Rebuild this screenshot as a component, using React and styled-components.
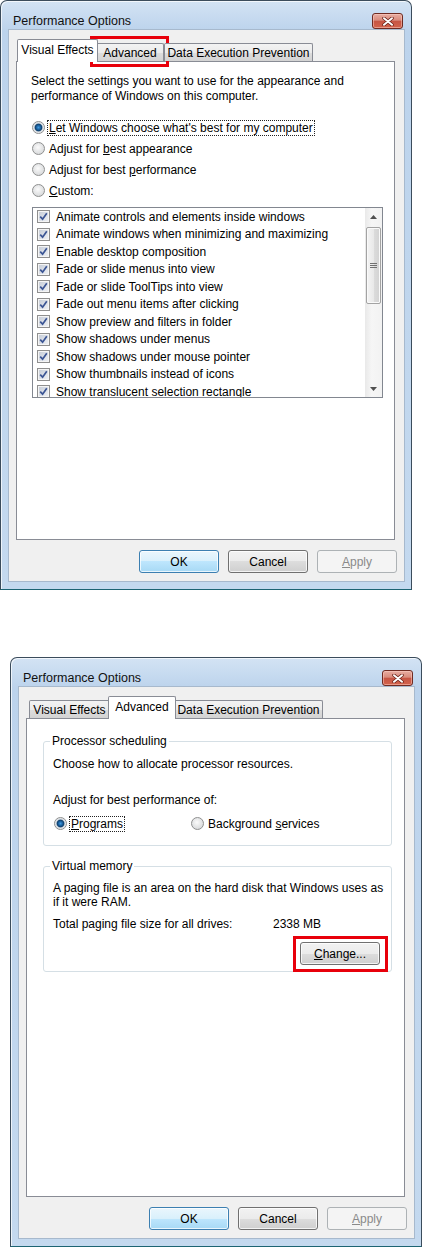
import React from "react";
import styled, { createGlobalStyle } from "styled-components";

const GlobalStyle = createGlobalStyle`
  body {
    margin: 0;
    background: #fff;
  }
`;

const uiFont = `"Segoe UI", "Liberation Sans", Arial, sans-serif`;

const effects = [
  "Animate controls and elements inside windows",
  "Animate windows when minimizing and maximizing",
  "Enable desktop composition",
  "Fade or slide menus into view",
  "Fade or slide ToolTips into view",
  "Fade out menu items after clicking",
  "Show preview and filters in folder",
  "Show shadows under menus",
  "Show shadows under mouse pointer",
  "Show thumbnails instead of icons",
  "Show translucent selection rectangle",
];

const Page = styled.div`
  display: flex;
  flex-direction: column;
  gap: 67px;
  width: 423px;
  font-family: ${uiFont};
  font-size: 12px;
  color: #000;
`;

const Window = styled.div`
  position: relative;
  margin-left: ${(p) => p.$offset || 0}px;
  width: 412px;
  height: 590px;
  box-sizing: border-box;
  display: flex;
  flex-direction: column;
  padding: 0 7px 8px 8px;
  border: 1px solid #3b4c5c;
  border-bottom-color: #1d6473;
  border-radius: 7px 7px 0 0;
  background: linear-gradient(180deg, #d3e3f4 0, #bcd3ec 30px, #c4d9ef 100%);
  box-shadow: inset 1px 1px 0 rgba(255, 255, 255, 0.7);
`;

const TitleBar = styled.div`
  height: 29px;
  box-sizing: border-box;
  padding: 11px 1px 0 4px;
  display: flex;
  align-items: center;
  justify-content: space-between;
`;

const Title = styled.span`
  color: #111;
  font-size: 12.5px;
  line-height: 16px;
`;

const CloseButton = styled.span`
  width: 31px;
  height: 16px;
  box-sizing: border-box;
  border: 1px solid #6f2b22;
  border-radius: 3px;
  display: flex;
  align-items: center;
  justify-content: center;
  background: linear-gradient(180deg, #e8ada2 0, #d98b7c 45%, #c65544 50%, #d3634c 100%);
  box-shadow: inset 0 0 0 1px rgba(255, 210, 200, 0.5);
`;

const Client = styled.div`
  flex: 1;
  display: flex;
  flex-direction: column;
  padding: 8px 7px 8px 7px;
  background: #f0f0f0;
  box-shadow: 0 0 0 1px #a7b9cd;
`;

const TabStrip = styled.div`
  height: 23px;
  display: flex;
  align-items: flex-end;
  padding-left: 3px;
`;

const Tab = styled.div`
  position: relative;
  z-index: ${(p) => (p.$active ? 2 : 1)};
  width: ${(p) => p.$width}px;
  height: ${(p) => (p.$active ? 23 : 18)}px;
  margin: ${(p) => (p.$active ? "0 -2px -1px" : "0")};
  box-sizing: border-box;
  display: flex;
  align-items: center;
  justify-content: center;
  padding-bottom: ${(p) => (p.$active ? 3 : 0)}px;
  border: 1px solid #898c95;
  border-bottom: none;
  border-radius: 2px 2px 0 0;
  background: ${(p) =>
    p.$active
      ? "#fff"
      : "linear-gradient(180deg, #f3f3f3 0, #ebebeb 50%, #dedede 50%, #d3d3d3 100%)"};
  white-space: nowrap;

  &::after {
    content: "";
    display: ${(p) => (p.$marked ? "block" : "none")};
    position: absolute;
    inset: -8px -6px -6px -7px;
    border: 3px solid #e8000b;
  }
`;

const Panel = styled.div`
  flex: 1;
  margin-right: 2px;
  background: #fff;
  border: 1px solid #898c95;
  display: flex;
  flex-direction: column;
  padding: ${(p) => p.$pad};
`;

const Text = styled.p`
  margin: ${(p) => p.$top || 0}px 0 0;
  line-height: ${(p) => p.$lh || 15}px;
  white-space: nowrap;
`;

const Options = styled.div`
  margin-top: ${(p) => p.$top || 0}px;
  display: flex;
  flex-direction: ${(p) => (p.$row ? "row" : "column")};
`;

const Option = styled.label`
  height: ${(p) => p.$h || 21}px;
  width: ${(p) => (p.$w ? `${p.$w}px` : "auto")};
  display: flex;
  align-items: center;
  gap: 4px;
  padding-left: 1px;
  white-space: nowrap;
`;

const Radio = styled.span`
  flex: none;
  width: 13px;
  height: 13px;
  box-sizing: border-box;
  border-radius: 50%;
  border: 1px solid #8e8f8f;
  background: ${(p) =>
    p.$checked
      ? "radial-gradient(circle, #3f9ae0 0, #1b5f9c 2.2px, #0d3e6c 3.4px, #cfd6dd 4.3px, #eef0f2 5.5px)"
      : "radial-gradient(circle at 45% 40%, #fbfbfb 0, #e6e7e8 45%, #cfd1d3 100%)"};
`;

const Focus = styled.span`
  outline: 1px dotted #222;
  outline-offset: 0;
  padding: 0 1px;
  margin-left: -1px;
  line-height: 14px;
`;

const ListBox = styled.div`
  margin: ${(p) => p.$top || 0}px 0 0 1px;
  width: 351px;
  height: 191px;
  box-sizing: border-box;
  border: 1px solid #828790;
  display: flex;
  overflow: hidden;
`;

const Items = styled.div`
  flex: 1;
  overflow: hidden;
`;

const Item = styled.div`
  height: 17.5px;
  display: flex;
  align-items: center;
  gap: 6px;
  padding-left: 4px;
  white-space: nowrap;
`;

const Check = styled.span`
  flex: none;
  width: 13px;
  height: 13px;
  box-sizing: border-box;
  border: 1px solid #8f8f8f;
  background: linear-gradient(135deg, #c3cad5 0, #dfe3ea 60%, #f0f2f5 100%);
  box-shadow: inset 0 0 0 1px #f5f5f5;
  display: flex;
  align-items: center;
  justify-content: center;
`;

const ScrollBar = styled.div`
  width: 17px;
  display: flex;
  flex-direction: column;
  background: linear-gradient(90deg, #e9e9e9, #f6f6f6 40%, #f2f2f2);
`;

const Arrow = styled.div`
  height: 17px;
  display: flex;
  align-items: center;
  justify-content: center;
`;

const Track = styled.div`
  flex: 1;
  display: flex;
  flex-direction: column;
  align-items: center;
`;

const Thumb = styled.div`
  margin-top: 2px;
  width: 15px;
  height: 77px;
  box-sizing: border-box;
  border: 1px solid #a3a3a3;
  border-radius: 2px;
  background: linear-gradient(90deg, #f4f4f4 0, #e9e9e9 50%, #dcdcdc 51%, #d2d2d2 100%);
  box-shadow: inset 0 0 0 1px #fafafa;
  display: flex;
  align-items: center;
  justify-content: center;
`;

const ButtonRow = styled.div`
  margin-top: 10px;
  display: flex;
  justify-content: flex-end;
  gap: 9px;
`;

const Button = styled.div`
  position: relative;
  width: 80px;
  height: 23px;
  box-sizing: border-box;
  border: 1px solid ${(p) => (p.$primary ? "#3c7fb1" : p.$disabled ? "#adb2b5" : "#707070")};
  border-radius: 3px;
  display: flex;
  align-items: center;
  justify-content: center;
  color: ${(p) => (p.$disabled ? "#8a8a8a" : "#000")};
  background: ${(p) =>
    p.$primary
      ? "linear-gradient(180deg, #eaf6fd 0, #d9f0fc 50%, #bee6fd 50%, #a7d9f5 100%)"
      : p.$disabled
      ? "#f4f4f4"
      : "linear-gradient(180deg, #f2f2f2 0, #ebebeb 50%, #dddddd 50%, #cfcfcf 100%)"};
  box-shadow: inset 0 0 0 1px ${(p) => (p.$disabled ? "#f4f4f4" : "rgba(255,255,255,0.75)")};

  &::after {
    content: "";
    display: ${(p) => (p.$marked ? "block" : "none")};
    position: absolute;
    inset: -7px -9px -8px -8px;
    border: 3px solid #e8000b;
  }
`;

const Group = styled.fieldset`
  margin: ${(p) => p.$top || 0}px 0 0;
  padding: 0 11px ${(p) => p.$bottom}px 9px;
  border: 1px solid #d5dfe5;
  border-radius: 3px;
  min-width: 0;
`;

const Legend = styled.legend`
  margin-left: -3px;
  padding: 0 2px;
  line-height: 14px;
`;

const InfoRow = styled.div`
  margin-top: 8px;
  display: grid;
  grid-template-columns: 220px auto;
  line-height: 14px;
  white-space: nowrap;
`;

const ActionRow = styled.div`
  margin-top: 11px;
  display: flex;
  justify-content: flex-end;
`;

const CloseIcon = () => (
  <svg width="12" height="9" viewBox="0 0 12 9">
    <path d="M2 1.2 L10 7.8 M10 1.2 L2 7.8" stroke="#6a2218" strokeWidth="3.4" strokeLinecap="round" />
    <path d="M2 1.2 L10 7.8 M10 1.2 L2 7.8" stroke="#fff" strokeWidth="1.9" strokeLinecap="round" />
  </svg>
);

const CheckMark = () => (
  <svg width="9" height="9" viewBox="0 0 9 9">
    <path d="M1.2 4.6 L3.6 7.2 L7.8 1.2" fill="none" stroke="#3b5594" strokeWidth="1.7" />
  </svg>
);

const ArrowIcon = ({ down }) => (
  <svg width="7" height="4" viewBox="0 0 7 4">
    <polygon points={down ? "0,0 7,0 3.5,4" : "0,4 7,4 3.5,0"} fill="#505050" />
  </svg>
);

const Grip = () => (
  <svg width="7" height="5" viewBox="0 0 7 5">
    <path d="M0 0.5 H7 M0 2.5 H7 M0 4.5 H7" stroke="#707070" strokeWidth="1" />
  </svg>
);

const Frame = ({ offset, children }) => (
  <Window $offset={offset}>
    <TitleBar>
      <Title>Performance Options</Title>
      <CloseButton>
        <CloseIcon />
      </CloseButton>
    </TitleBar>
    <Client>{children}</Client>
  </Window>
);

const Tabs = ({ active, marked }) => (
  <TabStrip>
    <Tab $width={81} $active={active === 0}>Visual Effects</Tab>
    <Tab $width={68} $active={active === 1} $marked={marked}>Advanced</Tab>
    <Tab $width={149} $active={active === 2}>Data Execution Prevention</Tab>
  </TabStrip>
);

const Buttons = () => (
  <ButtonRow>
    <Button $primary>OK</Button>
    <Button>Cancel</Button>
    <Button $disabled>
      <span>
        <u>A</u>pply
      </span>
    </Button>
  </ButtonRow>
);

const VisualEffects = () => (
  <Frame offset={0}>
    <Tabs active={0} marked />
    <Panel $pad="12px 12px 0 14px">
      <Text>
        Select the settings you want to use for the appearance and
        <br />
        performance of Windows on this computer.
      </Text>
      <Options $top={13}>
        <Option>
          <Radio $checked />
          <Focus>
            <u>L</u>et Windows choose what's best for my computer
          </Focus>
        </Option>
        <Option>
          <Radio />
          <span>
            Adjust for <u>b</u>est appearance
          </span>
        </Option>
        <Option>
          <Radio />
          <span>
            Adjust for best <u>p</u>erformance
          </span>
        </Option>
        <Option>
          <Radio />
          <span>
            <u>C</u>ustom:
          </span>
        </Option>
      </Options>
      <ListBox $top={6}>
        <Items>
          {effects.map((e) => (
            <Item key={e}>
              <Check>
                <CheckMark />
              </Check>
              {e}
            </Item>
          ))}
        </Items>
        <ScrollBar>
          <Arrow>
            <ArrowIcon />
          </Arrow>
          <Track>
            <Thumb>
              <Grip />
            </Thumb>
          </Track>
          <Arrow>
            <ArrowIcon down />
          </Arrow>
        </ScrollBar>
      </ListBox>
    </Panel>
    <Buttons />
  </Frame>
);

const Advanced = () => (
  <Frame offset={10}>
    <Tabs active={1} />
    <Panel $pad="15px 12px 0 16px">
      <Group $bottom={14}>
        <Legend>Processor scheduling</Legend>
        <Text $top={9}>Choose how to allocate processor resources.</Text>
        <Text $top={21}>Adjust for best performance of:</Text>
        <Options $row $top={8}>
          <Option $h={15} $w={136}>
            <Radio $checked />
            <Focus>
              <u>P</u>rograms
            </Focus>
          </Option>
          <Option $h={15}>
            <Radio />
            <span>
              Background <u>s</u>ervices
            </span>
          </Option>
        </Options>
      </Group>
      <Group $top={13} $bottom={6}>
        <Legend>Virtual memory</Legend>
        <Text $top={8} $lh={14}>
          A paging file is an area on the hard disk that Windows uses as
          <br />
          if it were RAM.
        </Text>
        <InfoRow>
          <span>Total paging file size for all drives:</span>
          <span>2338 MB</span>
        </InfoRow>
        <ActionRow>
          <Button $marked>
            <span>
              <u>C</u>hange...
            </span>
          </Button>
        </ActionRow>
      </Group>
    </Panel>
    <Buttons />
  </Frame>
);

export default function App() {
  return (
    <Page>
      <GlobalStyle />
      <VisualEffects />
      <Advanced />
    </Page>
  );
}
